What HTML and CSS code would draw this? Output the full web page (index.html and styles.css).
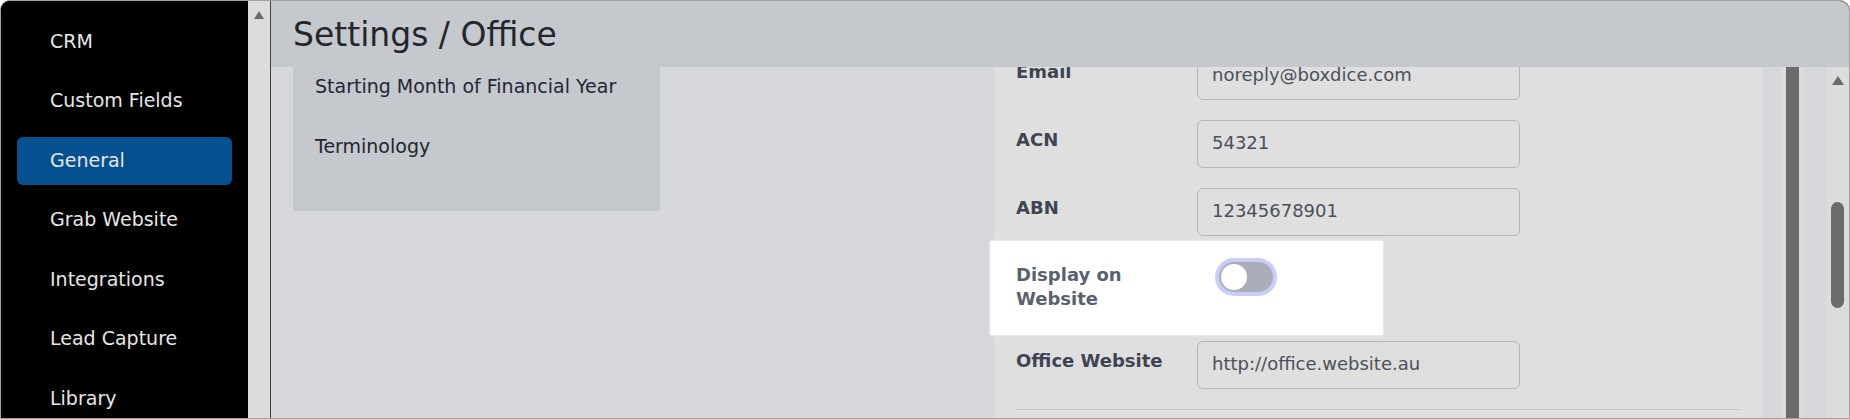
FILE: index.html
```html
<!DOCTYPE html>
<html>
<head>
    <meta charset="utf-8">
    <title>Settings / Office</title>
    <link rel="stylesheet" href="styles.css">
</head>
<body>
<div class="app">
    <div class="sidebar">
        <ul class="side-nav">
            <li><a href="#">CRM</a></li>
            <li><a href="#">Custom Fields</a></li>
            <li><a href="#" class="active">General</a></li>
            <li><a href="#">Grab Website</a></li>
            <li><a href="#">Integrations</a></li>
            <li><a href="#">Lead Capture</a></li>
            <li><a href="#">Library</a></li>
        </ul>
    </div>
    <div class="side-scroll"><span class="arrow-up"></span></div>
    <div class="main">
        <div class="main-header">
            <h1>Settings / Office</h1>
        </div>
        <div class="main-body">
            <div class="content">
                <div class="section-list">
                    <p>Starting Month of Financial Year</p>
                    <p>Terminology</p>
                </div>
                <div class="form-wrap">
                    <div class="form-panel">
                        <div class="form-row">
                            <label>Email</label>
                            <input type="text" value="noreply@boxdice.com">
                        </div>
                        <div class="form-row">
                            <label>ACN</label>
                            <input type="text" value="54321">
                        </div>
                        <div class="form-row">
                            <label>ABN</label>
                            <input type="text" value="12345678901">
                        </div>
                        <div class="form-row form-row-focus">
                            <label>Display on Website</label>
                            <span class="switch"><span class="knob"></span></span>
                        </div>
                        <div class="form-row">
                            <label>Office Website</label>
                            <input type="text" value="http://office.website.au">
                        </div>
                        <div class="form-divider"></div>
                    </div>
                    <div class="inner-scroll"><div class="inner-thumb"></div></div>
                </div>
            </div>
            <div class="page-scroll">
                <span class="arrow-up"></span>
                <span class="thumb"></span>
            </div>
        </div>
    </div>
</div>
</body>
</html>
```

FILE: styles.css
```css
*{
    box-sizing: border-box;
}
html,body{
    margin: 0;
    padding: 0;
    background: #fff;
}
body{
    font-family: "DejaVu Sans", sans-serif;
}
.app{
    display: flex;
    width: 1850px;
    height: 419px;
    border: 1px solid #a2a2a2;
    border-radius: 10px 10px 0 0;
    overflow: hidden;
    background: #000;
}

/* left menu */
.sidebar{
    flex: none;
    width: 247px;
    background: #000;
}
.side-nav{
    list-style: none;
    margin: 0;
    padding: 16.5px 16px 0;
    display: flex;
    flex-direction: column;
    gap: 11.5px;
}
.side-nav a{
    display: block;
    height: 48px;
    line-height: 47px;
    padding-left: 33px;
    font-size: 19px;
    color: #e6e6e6;
    text-decoration: none;
    border-radius: 6px;
}
.side-nav a.active{
    background: #05508f;
}
.side-scroll{
    flex: none;
    width: 22px;
    padding-top: 10px;
    background: #dcdcdc;
    display: flex;
    flex-direction: column;
    align-items: center;
}
.arrow-up{
    display: block;
    width: 0;
    height: 0;
    border-left: 5.5px solid transparent;
    border-right: 5.5px solid transparent;
    border-bottom: 8px solid #6b6b6b;
}

/* main area */
.main{
    flex: 1;
    min-width: 0;
    display: flex;
    flex-direction: column;
    border-left: 1px solid #3c414c;
}
.main-header{
    flex: none;
    height: 66px;
    padding: 2px 0 0 22px;
    background: #c5c8cc;
    display: flex;
    align-items: center;
}
.main-header h1{
    margin: 0;
    font-size: 33px;
    font-weight: normal;
    line-height: 40px;
    color: #23262d;
}
.main-body{
    flex: 1;
    min-height: 0;
    display: flex;
}
.content{
    flex: 1;
    display: flex;
    align-items: flex-start;
    padding: 0 22px;
    background: #d6d7da;
    overflow: hidden;
}
.section-list{
    flex: none;
    width: 367px;
    padding: 0 0 24px 22px;
    background: #c5c8cc;
}
.section-list p{
    margin: 0;
    height: 60px;
    padding-top: 7px;
    line-height: 24px;
    font-size: 19px;
    color: #222733;
}

/* office form */
.form-wrap{
    margin-left: auto;
    align-self: stretch;
    display: flex;
    gap: 19px;
}
.form-panel{
    width: 768px;
    padding: 0 22px;
    background: #dfdfdf;
}
.form-row{
    display: flex;
    align-items: flex-start;
    margin-bottom: 20px;
}
.form-row:first-child{
    margin-top: -15px;
}
.form-row label{
    flex: none;
    width: 181px;
    padding: 8px 14px 0 0;
    font-size: 18px;
    font-weight: bold;
    line-height: 24px;
    color: #3e4451;
}
.form-row input{
    width: 323px;
    height: 48px;
    padding: 0 14px 3px;
    border: 1px solid #b5b5b5;
    border-radius: 6px;
    background: transparent;
    font-family: inherit;
    font-size: 18px;
    color: #4b505a;
    outline: none;
}
.form-row-focus{
    width: 393px;
    height: 94px;
    margin: -15px 0 6px -26px;
    padding: 21px 0 0 26px;
    background: #fff;
    box-shadow: 0 0 2px #fff;
}
.form-row-focus label{
    padding-top: 1px;
    color: #5a616e;
}
.switch{
    display: flex;
    width: 54px;
    height: 30px;
    margin-left: 22px;
    padding: 2px;
    border-radius: 15px;
    background: #a9aeb9;
    box-shadow: 0 0 0 4px #c9cdf7;
}
.knob{
    width: 26px;
    height: 26px;
    border-radius: 50%;
    background: #fff;
}
.form-divider{
    height: 0;
    margin-top: 4px;
    border-top: 1px solid #c9c9c9;
}
.inner-scroll{
    width: 23px;
    padding: 0 5px;
    background: #dcdcdc;
}
.inner-thumb{
    height: 100%;
    background: #6b6b6b;
}

/* page scrollbar */
.page-scroll{
    flex: none;
    width: 23px;
    padding-top: 9px;
    background: #dcdcdc;
    display: flex;
    flex-direction: column;
    align-items: center;
}
.page-scroll .arrow-up{
    border-left-width: 6px;
    border-right-width: 6px;
    border-bottom-width: 9px;
}
.page-scroll .thumb{
    display: block;
    width: 13px;
    height: 106px;
    margin-top: 117px;
    border-radius: 7px;
    background: #6b6b6b;
}
```
